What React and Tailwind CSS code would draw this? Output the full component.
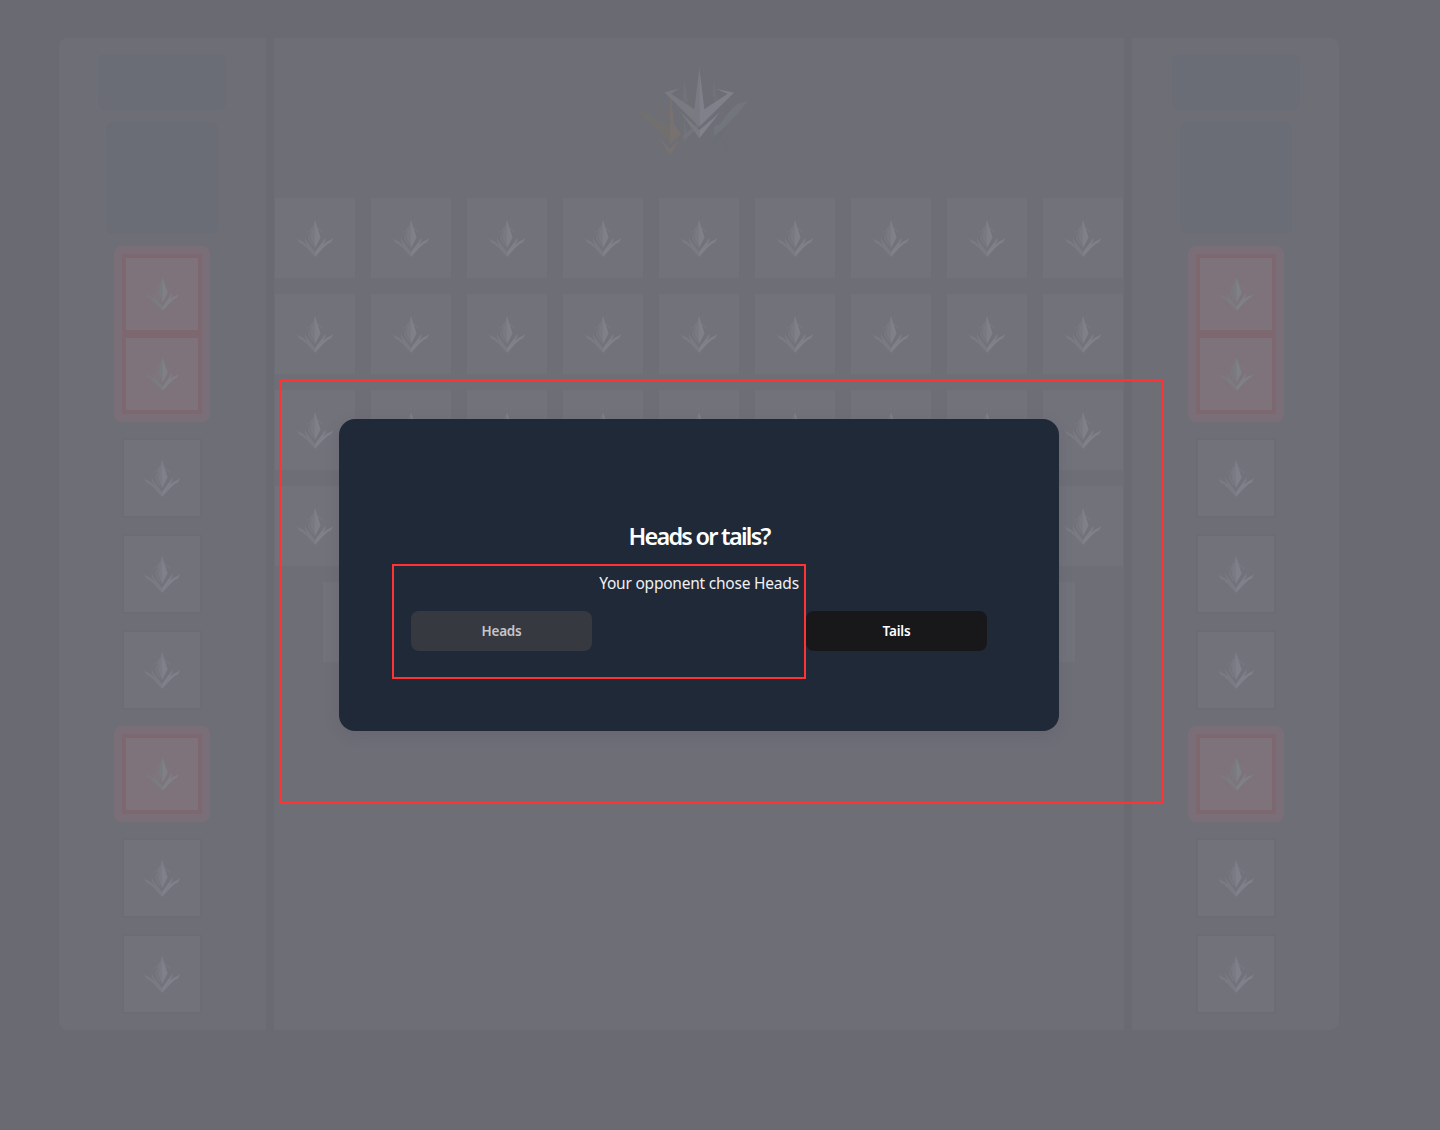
function Emblem({ tinted = false }) {
  const light = tinted ? "#7e8186" : "#80808a";
  const mid = tinted ? "#7a7b80" : "#7a7a83";
  return (
    <svg viewBox="0 0 36 37" className={tinted ? "h-[34px] w-[33px]" : "h-[37px] w-9"}>
      <path d="M18 0 15.4 8 13.6 17.8 18 28Z" fill={mid} />
      <path d="M18 0 20.6 8 23.6 17.5 18 28Z" fill={light} />
      <path d="M15.6 8.5 11.6 17.6 15.6 25.5" fill="none" stroke={mid} strokeWidth="1.2" />
      <path d="M16 6.5Q13.5 11 9.5 12.6M20 6.5Q22.5 11 26.5 12.6" fill="none" stroke={mid} strokeWidth=".9" />
      <path d="M0 18.2Q3 20.6 6 21.6L9.8 24.4 7.8 20.6 7.6 17 9.4 20.4 12.4 24.6 18 32V37L10 28.2 5 23.8 2 22.4Z" fill={mid} />
      <path d="M36 18.2Q33 20.6 30 21.6L26.2 24.4 28.2 20.6 28.4 17 26.6 20.4 23.6 24.6 18 32V37L26 28.2 31 23.8 34 22.4Z" fill={light} />
    </svg>
  );
}

function Crest() {
  return (
    <svg viewBox="0 0 450 345" className="mr-2 h-[115px] w-[150px]">
      <path d="M192 70 204 140 188 140ZM192 185 200 235 192 280ZM282 70 290 140 276 140Z" fill="#72727b" />
      <path d="M50 162 80 176 104 192 130 204 150 216V264L112 222 88 204Z" fill="#72706f" />
      <path d="M96 142 112 152 150 180 146 192 120 176Z" fill="#706e71" />
      <path d="M150 95 156 150 162 206 184 238 150 268Z" fill="#777270" />
      <path d="M114 244 150 282V302ZM184 246 150 282V302Z" fill="#777270" />
      <path d="M188 244 232 204 238 212 194 256Z" fill="#74747c" />
      <path d="M384 138 352 146 320 178 302 206 282 214V244L318 212 346 184Z" fill="#73757c" />
      <path d="M268 130 284 124 282 160ZM282 246V276L324 212ZM300 250 324 272V302Z" fill="#6b6e75" />
      <path d="M324 146 328 168 318 180Z" fill="#6b6e75" />
      <path d="M133 112 180 100 153 116 223 163 238 38V215Z" fill="#7a7a83" />
      <path d="M342 113 288 101 323 116 253 163 238 38V215Z" fill="#80808a" />
      <path d="M178 168 238 226V250Z" fill="#7a7a83" />
      <path d="M300 172 238 226V250Z" fill="#82828b" />
    </svg>
  );
}

function BoardTile() {
  return (
    <div className="flex size-20 items-center justify-center bg-[#72727b]">
      <Emblem />
    </div>
  );
}

function SideTile() {
  return (
    <div className="flex size-20 shrink-0 items-center justify-center border-2 border-[#6c6c75] bg-[#72727b]">
      <Emblem />
    </div>
  );
}

function BanGroup({ count }) {
  return (
    <div className="shrink-0 rounded-lg bg-[#7a6f78] p-2">
      {Array.from({ length: count }, (_, i) => (
        <div key={i} className="flex size-20 items-center justify-center border-4 border-[#7d6870] bg-[#7f737b]">
          <Emblem tinted />
        </div>
      ))}
    </div>
  );
}

function SidePanel({ className }) {
  return (
    <aside className={`flex w-[207px] flex-col items-center gap-4 bg-[#6e6e77] py-4 ${className}`}>
      <div className="flex flex-col items-center gap-3">
        <div className="h-14 w-32 rounded-lg bg-[#6a6d75]" />
        <div className="size-28 rounded-lg bg-[#6a6d75]" />
        <BanGroup count={2} />
      </div>
      <SideTile />
      <SideTile />
      <SideTile />
      <BanGroup count={1} />
      <SideTile />
      <SideTile />
    </aside>
  );
}

function Row({ count }) {
  return (
    <div className="flex justify-center gap-4">
      {Array.from({ length: count }, (_, i) => (
        <BoardTile key={i} />
      ))}
    </div>
  );
}

export default function App() {
  return (
    <div className="relative h-[1130px] w-[1440px] overflow-hidden bg-[#6a6a73] pt-[38px] pl-[59px] font-['Noto_Sans','Open_Sans',sans-serif]">
      <div className="flex h-[992px] w-[1280px] gap-2">
        <SidePanel className="rounded-l-lg pr-px" />
        <main className="flex w-[850px] flex-col items-center bg-[#6e6e77] pt-[17px]">
          <Crest />
          <div className="mt-7 flex flex-col gap-4">
            <Row count={9} />
            <Row count={9} />
            <Row count={9} />
            <Row count={9} />
            <Row count={8} />
          </div>
        </main>
        <SidePanel className="rounded-r-lg pl-px" />
      </div>

      <div
        role="dialog"
        className="absolute top-[419px] left-[339px] flex h-[312px] w-[720px] flex-col items-center rounded-2xl bg-[#202938] px-[72px] pt-[101px] text-white shadow-[0_4px_14px_rgba(80,72,88,0.18)]"
      >
        <h2 className="text-[23.5px] leading-8 font-semibold tracking-[-1.75px] whitespace-nowrap">Heads or tails?</h2>
        <p className="mt-[19px] text-[15.5px] leading-6 tracking-[-0.22px] whitespace-nowrap text-[#f0f1f3]">
          Your opponent chose Heads
        </p>
        <div className="mt-4 flex w-full justify-between text-[13.5px] font-semibold tracking-[-0.2px]">
          <button className="h-10 w-[181px] rounded-lg bg-[#373941] text-[#c5c6c9]">Heads</button>
          <button className="h-10 w-[181px] rounded-lg bg-[#18181a]">Tails</button>
        </div>
      </div>

      <div className="absolute top-[379px] left-[279px] h-[425px] w-[885px] border-2 border-[#ff3333]" />
      <div className="absolute top-[564px] left-[392px] h-[115px] w-[414px] border-2 border-[#ff3333]" />
    </div>
  );
}
